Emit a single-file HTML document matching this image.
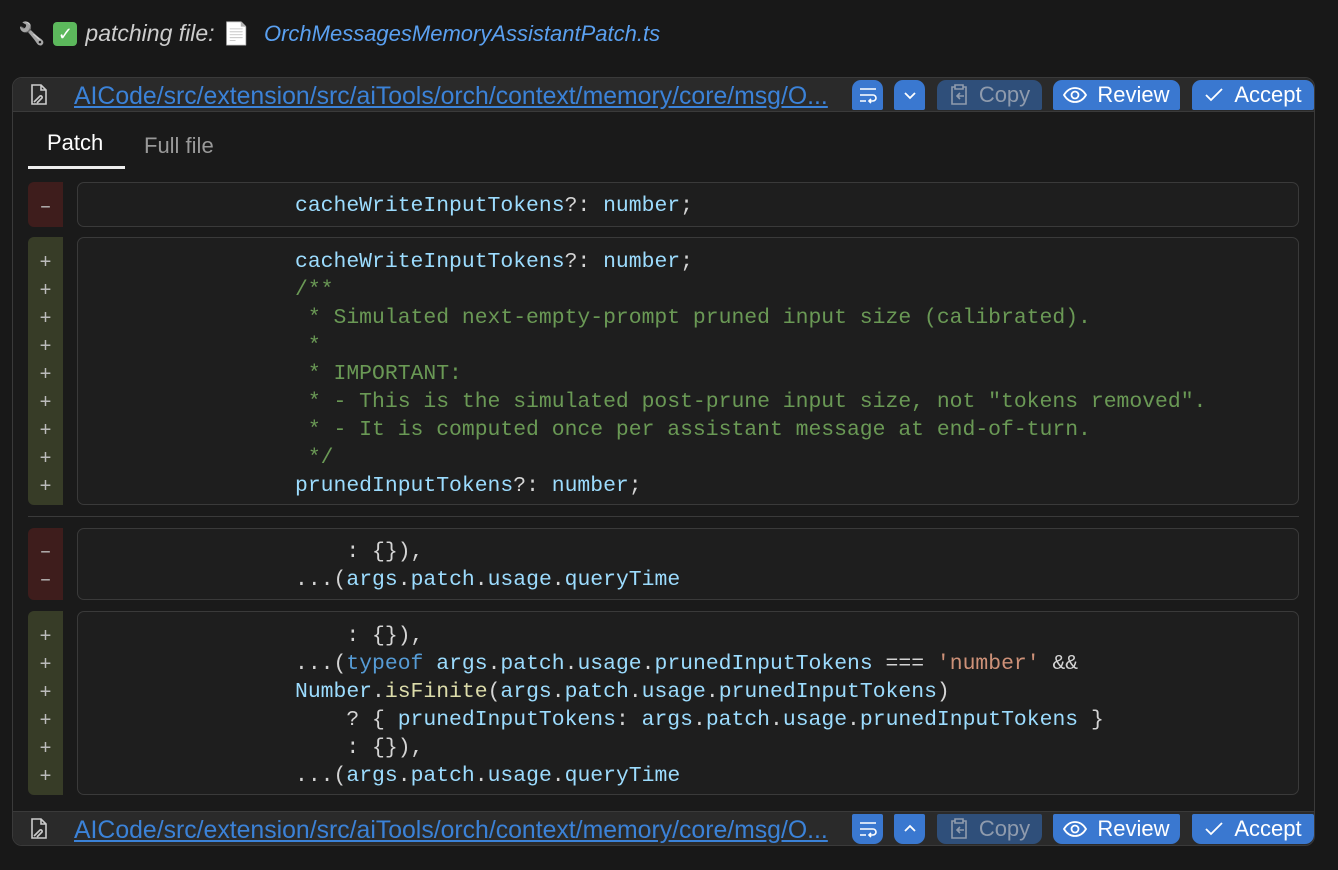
<!DOCTYPE html>
<html><head><meta charset="utf-8"><style>
*{box-sizing:border-box;margin:0;padding:0}
body{width:1338px;height:870px;background:#181818;font-family:"Liberation Sans",sans-serif;position:relative;overflow:hidden;color:#ccc}
.top{position:absolute;left:18px;top:20px;font-size:22px;color:#ccc;font-style:italic;display:flex;align-items:center;gap:8px}
.top .fn{color:#5aa0f0}
.box{position:absolute;left:12px;top:77px;width:1303px;height:769px;border:1px solid #3a3a3a;border-radius:10px;background:#1a1a1a;overflow:hidden}
.bar{position:absolute;left:0;width:100%;height:34px;background:#2a2a2a;border-color:#3a3a3a;border-style:solid;border-width:0}
.bar.h{top:0;border-bottom-width:1px}
.bar.f{top:733px;border-top-width:1px}
.path{position:absolute;left:61px;top:5px;font-size:24.8px;color:#3b82d8;text-decoration:underline;white-space:nowrap}
.fi{position:absolute;left:16px;top:6px}
.btn{position:absolute;height:30px;background:#3a78d0;color:#fff;font-size:22px;display:flex;align-items:center;justify-content:center;gap:10px}
.h .btn{top:2px;border-radius:9px 9px 2px 2px}
.f .btn{top:2px;border-radius:2px 2px 9px 9px}
.btn.c{background:#2f4f7a;color:#8f9bad}
.tabs{position:absolute;left:34px;top:52px;font-size:22px}
.tab1{position:absolute;left:15px;top:88px;width:97px;height:3px;background:#eee}
.hunk{position:absolute;left:15px;width:1271px}
.g{position:absolute;left:0;top:0;bottom:0;width:35px;border-radius:6px 0 0 6px;color:#bbb;font-family:"Liberation Mono",monospace;font-size:20px;text-align:center}
.g.d{background:#3e1d1c}.g.a{background:#373c27}
.code{position:absolute;left:49px;right:0;top:0;bottom:0;border:1px solid #3a3a3a;border-radius:7px;background:#1e1e1e}
pre{font-family:"Liberation Mono",monospace;font-size:21.4px;line-height:28px;color:#9cdcfe;position:absolute;left:217px}
.gl{line-height:28px;position:absolute;left:0;width:35px}
.p{color:#d4d4d4}.cm{color:#6a9955}.k{color:#569cd6}.s{color:#ce9178}.fu{color:#dcdcaa}
.sep{position:absolute;left:15px;top:438px;width:1271px;height:1px;background:#3a3a3a}
</style></head><body>
<div class="top"><span style="font-style:normal;filter:grayscale(1)">🔧</span><span style="display:inline-block;width:24px;height:24px;background:#5cb85c;border-radius:4px;color:#fff;font-style:normal;font-size:18px;text-align:center;line-height:24px">✓</span><span style="font-size:23px">patching file:</span><span style="font-style:normal;filter:grayscale(1)">📄</span><span class="fn" style="margin-left:6px">OrchMessagesMemoryAssistantPatch.ts</span></div>
<div class="box">
 <div class="bar h">
  <svg class="fi" width="20" height="22" viewBox="0 0 20 22" fill="none" stroke="#ccc" stroke-width="1.6"><path d="M3 1h9l5 5v14H3z M12 1v5h5"/><path d="M5 18l6-6a1.5 1.5 0 012 2l-5 5"/></svg>
  <span class="path">AICode/src/extension/src/aiTools/orch/context/memory/core/msg/O...</span>
  <div class="btn" style="left:839px;width:31px"><svg width="20" height="18" viewBox="0 0 20 18" fill="none" stroke="#fff" stroke-width="1.6"><path d="M2 3h16M2 9h13a3 3 0 010 6h-4M13 13l-2 2 2 2M2 15h6"/></svg></div>
  <div class="btn" style="left:881px;width:31px"><svg width="14" height="10" viewBox="0 0 14 10" fill="none" stroke="#fff" stroke-width="1.8"><path d="M2 3l5 5 5-5"/></svg></div>
  <div class="btn c" style="left:924px;width:105px"><svg width="20" height="22" viewBox="0 0 20 22" fill="none" stroke="#8f9bad" stroke-width="1.6"><path d="M6 3H3v17h14V3h-3M6 1h8v4H6z M15 12H8M11 9l-3 3 3 3"/></svg>Copy</div>
  <div class="btn" style="left:1040px;width:127px"><svg width="24" height="16" viewBox="0 0 24 16" fill="none" stroke="#fff" stroke-width="1.8"><path d="M1 8c3-5 7-7 11-7s8 2 11 7c-3 5-7 7-11 7S4 13 1 8z"/><circle cx="12" cy="8" r="3.5"/></svg>Review</div>
  <div class="btn" style="left:1179px;width:122px"><svg width="20" height="16" viewBox="0 0 20 16" fill="none" stroke="#fff" stroke-width="1.8"><path d="M2 8l5 5L18 2"/></svg>Accept</div>
 </div>
 <div class="tabs"><span style="color:#fff">Patch</span><span style="color:#999;position:absolute;left:97px;top:3px;white-space:nowrap">Full file</span></div>
 <div class="tab1"></div>

 <div class="hunk" style="top:104px;height:45px"><div class="g d"><div class="gl" style="top:12px">–</div></div><div class="code"><pre style="top:9px">cacheWriteInputTokens<span class="p">?: </span>number<span class="p">;</span></pre></div></div>

 <div class="hunk" style="top:159px;height:268px"><div class="g a"><div class="gl" style="top:13px">+<br>+<br>+<br>+<br>+<br>+<br>+<br>+<br>+</div></div><div class="code"><pre style="top:10px">cacheWriteInputTokens<span class="p">?: </span>number<span class="p">;</span>
<span class="cm">/**
 * Simulated next-empty-prompt pruned input size (calibrated).
 *
 * IMPORTANT:
 * - This is the simulated post-prune input size, not "tokens removed".
 * - It is computed once per assistant message at end-of-turn.
 */</span>
prunedInputTokens<span class="p">?: </span>number<span class="p">;</span></pre></div></div>

 <div class="sep"></div>

 <div class="hunk" style="top:450px;height:72px"><div class="g d"><div class="gl" style="top:11px">–<br>–</div></div><div class="code"><pre style="top:9px"><span class="p">    : {}),
...(</span>args<span class="p">.</span>patch<span class="p">.</span>usage<span class="p">.</span>queryTime</pre></div></div>

 <div class="hunk" style="top:533px;height:184px"><div class="g a"><div class="gl" style="top:13px">+<br>+<br>+<br>+<br>+<br>+</div></div><div class="code"><pre style="top:10px"><span class="p">    : {}),
...(</span><span class="k">typeof</span> args<span class="p">.</span>patch<span class="p">.</span>usage<span class="p">.</span>prunedInputTokens <span class="p">===</span> <span class="s">'number'</span> <span class="p">&amp;&amp;</span>
Number<span class="p">.</span><span class="fu">isFinite</span><span class="p">(</span>args<span class="p">.</span>patch<span class="p">.</span>usage<span class="p">.</span>prunedInputTokens<span class="p">)</span>
<span class="p">    ? { </span>prunedInputTokens<span class="p">: </span>args<span class="p">.</span>patch<span class="p">.</span>usage<span class="p">.</span>prunedInputTokens <span class="p">}</span>
<span class="p">    : {}),
...(</span>args<span class="p">.</span>patch<span class="p">.</span>usage<span class="p">.</span>queryTime</pre></div></div>

 <div class="bar f">
  <svg class="fi" width="20" height="22" viewBox="0 0 20 22" fill="none" stroke="#ccc" stroke-width="1.6"><path d="M3 1h9l5 5v14H3z M12 1v5h5"/><path d="M5 18l6-6a1.5 1.5 0 012 2l-5 5"/></svg>
  <span class="path">AICode/src/extension/src/aiTools/orch/context/memory/core/msg/O...</span>
  <div class="btn" style="left:839px;width:31px"><svg width="20" height="18" viewBox="0 0 20 18" fill="none" stroke="#fff" stroke-width="1.6"><path d="M2 3h16M2 9h13a3 3 0 010 6h-4M13 13l-2 2 2 2M2 15h6"/></svg></div>
  <div class="btn" style="left:881px;width:31px"><svg width="14" height="10" viewBox="0 0 14 10" fill="none" stroke="#fff" stroke-width="1.8"><path d="M2 7l5-5 5 5"/></svg></div>
  <div class="btn c" style="left:924px;width:105px"><svg width="20" height="22" viewBox="0 0 20 22" fill="none" stroke="#8f9bad" stroke-width="1.6"><path d="M6 3H3v17h14V3h-3M6 1h8v4H6z M15 12H8M11 9l-3 3 3 3"/></svg>Copy</div>
  <div class="btn" style="left:1040px;width:127px"><svg width="24" height="16" viewBox="0 0 24 16" fill="none" stroke="#fff" stroke-width="1.8"><path d="M1 8c3-5 7-7 11-7s8 2 11 7c-3 5-7 7-11 7S4 13 1 8z"/><circle cx="12" cy="8" r="3.5"/></svg>Review</div>
  <div class="btn" style="left:1179px;width:122px"><svg width="20" height="16" viewBox="0 0 20 16" fill="none" stroke="#fff" stroke-width="1.8"><path d="M2 8l5 5L18 2"/></svg>Accept</div>
 </div>
</div>
</body></html>
